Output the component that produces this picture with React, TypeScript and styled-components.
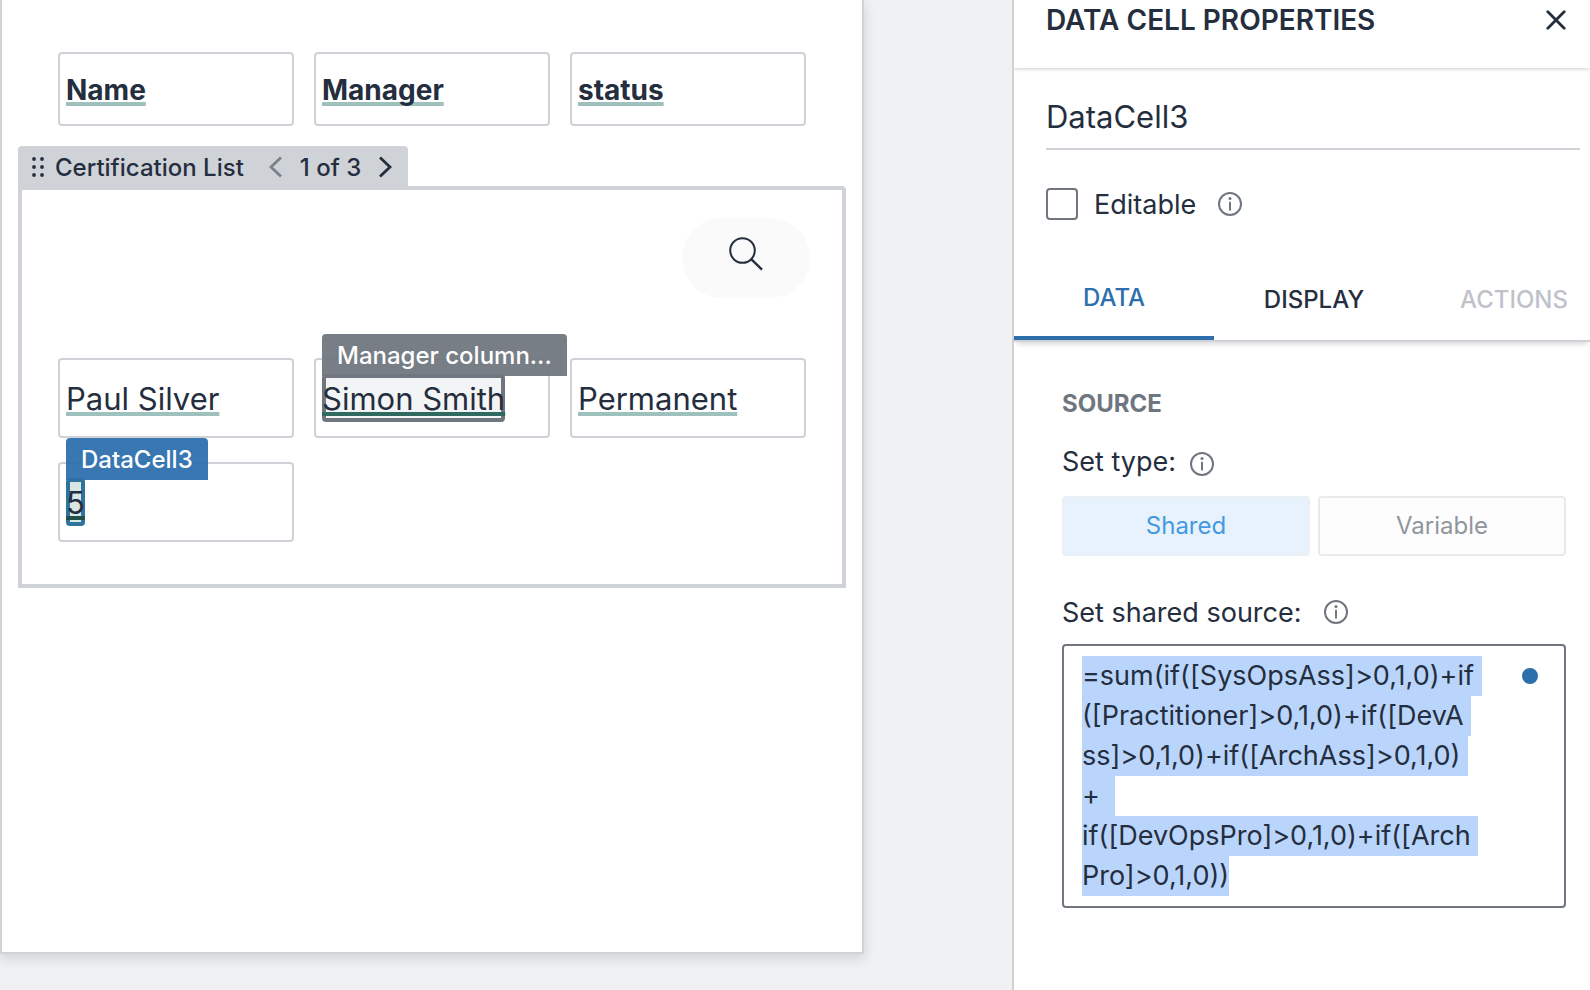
import React, { useEffect, useRef } from "react";
import styled, { createGlobalStyle, css } from "styled-components";

const ink = "#242e3e";
const line = "#cfd3d8";
const muted = "#6f7680";
const blue = "#2c6fac";

const GlobalStyle = createGlobalStyle`
  *, *::before, *::after { box-sizing: border-box; }
  body {
    margin: 0;
    background: #f0f1f3;
    color: ${ink};
    font-family: Inter, "Liberation Sans", sans-serif;
    font-size: 28px;
  }
  button, input, textarea { font: inherit; color: inherit; }
  button { cursor: pointer; }
`;

const Layout = styled.div`
  display: flex;
  min-height: 100vh;
  overflow: hidden;
`;

/* Canvas */

const Canvas = styled.main`
  flex: 1;
  min-width: 0;
  display: flex;
  padding: 0 148px 36px 0;
`;

const Page = styled.section`
  flex: 1;
  min-width: 0;
  padding: 52px 16px 0;
  background: #fff;
  border: 2px solid ${line};
  border-top: 0;
  box-shadow: 0 4px 12px rgba(0, 0, 0, 0.14);
`;

const CellGrid = styled.div<{ $inset?: boolean }>`
  display: grid;
  grid-template-columns: repeat(3, minmax(0, 1fr));
  gap: 24px 20px;
  padding: ${(p) => (p.$inset ? "0 40px" : "0")};
`;

const Cell = styled.div<{ $header?: boolean }>`
  display: flex;
  align-items: center;
  height: ${(p) => (p.$header ? 74 : 80)}px;
  padding: 0 6px;
  border: 2px solid ${line};
  border-radius: 4px;
  font-size: ${(p) => (p.$header ? 28 : 31)}px;
  font-weight: ${(p) => (p.$header ? 700 : 400)};
`;

type Mark = "hover" | "active";

const Value = styled.span<{ $mark?: Mark }>`
  position: relative;
  padding-top: 2px;
  line-height: 46px;
  white-space: nowrap;
  text-decoration: underline 4px #9fc1bd;
  text-underline-offset: 2px;
  text-decoration-skip-ink: none;
  border-radius: 4px;
  ${(p) =>
    p.$mark === "hover" &&
    css`
      background: #f3f4f5;
      box-shadow: inset 0 0 0 4px #6f7680;
      text-decoration-color: #30695f;
    `}
  ${(p) =>
    p.$mark === "active" &&
    css`
      background: #dae6e2;
      box-shadow: inset 0 0 0 4px #2f749f;
      text-decoration-color: #20504b;
    `}
`;

const Tag = styled.span<{ $mark: Mark }>`
  position: absolute;
  left: 0;
  bottom: calc(100% - 2px);
  z-index: 1;
  padding: 2px 15px 0;
  border-radius: 4px 4px 0 0;
  background: ${(p) =>
    p.$mark === "hover" ? "rgba(111, 118, 126, 0.94)" : "rgba(44, 111, 172, 0.94)"};
  color: #fff;
  font-size: 24px;
  font-weight: 500;
  line-height: 40px;
`;

const ListTab = styled.div`
  display: inline-flex;
  align-items: center;
  height: 40px;
  margin-top: 20px;
  padding: 2px 13px 0 14px;
  background: ${line};
  border-radius: 4px 4px 0 0;
  font-size: 24px;
  font-weight: 500;
  vertical-align: top;
`;

const TabTitle = styled.span`
  margin: 0 22px 0 11px;
`;

const StepButton = styled.button<{ $dim?: boolean }>`
  display: flex;
  padding: 0;
  border: 0;
  background: none;
  color: ${(p) => (p.$dim ? "#7b828c" : ink)};
`;

const StepCount = styled.span`
  margin: 0 14px;
`;

const ListBox = styled.div`
  padding: 28px 36px 42px;
  border: 4px solid ${line};
  border-radius: 0 4px 0 0;
`;

const SearchButton = styled.button`
  display: flex;
  align-items: center;
  justify-content: center;
  width: 128px;
  height: 80px;
  margin: 0 -4px 60px auto;
  padding: 0 0 8px;
  border: 0;
  border-radius: 40px;
  background: #fafafa;
`;

/* Properties panel */

const Panel = styled.aside`
  flex: 0 0 578px;
  min-width: 0;
  overflow: hidden;
  background: #fff;
  border-left: 2px solid ${line};
`;

const PanelHeader = styled.header`
  display: flex;
  align-items: center;
  justify-content: space-between;
  padding: 0 24px 28px 32px;
  box-shadow: 0 1px 4px rgba(0, 0, 0, 0.2);
`;

const PanelTitle = styled.h1`
  margin: 0;
  font-size: 28px;
  font-weight: 600;
  line-height: 40px;
`;

const CloseButton = styled.button`
  display: flex;
  padding: 0;
  border: 0;
  background: none;
`;

const Identity = styled.div`
  padding: 16px 10px 0 32px;
`;

const NameInput = styled.input`
  display: block;
  width: 100%;
  height: 66px;
  padding: 0;
  border: 0;
  border-bottom: 2px solid ${line};
  border-radius: 0;
  background: none;
  outline: none;
  font-size: 31px;
`;

const CheckRow = styled.div`
  display: flex;
  align-items: center;
  margin-top: 38px;
  height: 32px;
`;

const Checkbox = styled.input`
  appearance: none;
  width: 32px;
  height: 32px;
  margin: 0 16px 0 0;
  border: 2px solid ${muted};
  border-radius: 4px;
  background: #fff;
`;

const FieldLabel = styled.label`
  padding-top: 2px;
  font-size: 27px;
  line-height: 28px;
`;

const InfoButton = styled.button<{ $gap: number }>`
  display: flex;
  margin-left: ${(p) => p.$gap}px;
  padding: 0;
  border: 0;
  background: none;
  color: ${muted};
`;

const Tabs = styled.div`
  display: flex;
  margin-top: 40px;
  border-bottom: 2px solid ${line};
  box-shadow: 0 5px 5px -3px rgba(0, 0, 0, 0.16);
`;

const Tab = styled.button<{ $active?: boolean }>`
  flex: 0 0 200px;
  height: 80px;
  padding: 0 0 2px;
  border: 0;
  border-bottom: ${(p) => (p.$active ? `4px solid ${blue}` : "0")};
  background: none;
  color: ${(p) => (p.$active ? blue : ink)};
  font-size: 24px;
  font-weight: 500;
  &:disabled { color: #bfc3c9; }
`;

const Source = styled.div`
  padding: 46px 24px 0 48px;
`;

const SectionTitle = styled.h2`
  margin: 0 0 26px;
  color: ${muted};
  font-size: 24px;
  font-weight: 700;
  line-height: 32px;
`;

const LabelRow = styled.div<{ $align: "center" | "end" }>`
  display: flex;
  align-items: ${(p) => p.$align};
  height: 30px;
`;

const Choices = styled.div`
  display: grid;
  grid-template-columns: 1fr 1fr;
  gap: 8px;
  margin: 20px 0 41px;
`;

const Choice = styled.button<{ $active?: boolean }>`
  height: 60px;
  padding: 0 0 2px;
  border: 2px solid ${(p) => (p.$active ? "#eaf0f6" : "#e9eaec")};
  border-radius: 4px;
  background: ${(p) => (p.$active ? "#e8f2fd" : "#fdfdfd")};
  color: ${(p) => (p.$active ? "#4499e0" : "#91969e")};
  font-size: 24px;
`;

const SourceField = styled.div`
  display: flex;
  align-items: flex-start;
  margin-top: 17px;
  padding: 10px 26px 10px 18px;
  border: 2px solid ${muted};
  border-radius: 4px;
`;

const Formula = styled.textarea`
  flex: 1;
  min-width: 0;
  height: 240px;
  padding: 0;
  border: 0;
  outline: none;
  resize: none;
  overflow: hidden;
  white-space: pre;
  background: none;
  font-size: 27px;
  line-height: 40px;
  &::selection { background: #bad5fb; color: ${ink}; }
`;

const Dot = styled.span`
  width: 16px;
  height: 16px;
  margin-top: 12px;
  border-radius: 50%;
  background: ${blue};
`;

const formula = [
  "=sum(if([SysOpsAss]>0,1,0)+if",
  "([Practitioner]>0,1,0)+if([DevA",
  "ss]>0,1,0)+if([ArchAss]>0,1,0)",
  "+ ",
  "if([DevOpsPro]>0,1,0)+if([Arch",
  "Pro]>0,1,0))",
].join("\n");

const headers = ["Name", "Manager", "status"];

const cells: { text: string; mark?: Mark; tag?: string }[] = [
  { text: "Paul Silver" },
  { text: "Simon Smith", mark: "hover", tag: "Manager column..." },
  { text: "Permanent" },
  { text: "5", mark: "active", tag: "DataCell3" },
];

const Grip = () => (
  <svg width="12" height="20" viewBox="0 0 12 20" fill={ink} aria-hidden="true">
    {[2, 10, 18].map((y) => (
      <React.Fragment key={y}>
        <circle cx="2" cy={y} r="1.9" />
        <circle cx="10" cy={y} r="1.9" />
      </React.Fragment>
    ))}
  </svg>
);

const Chevron = ({ back }: { back?: boolean }) => (
  <svg width="20" height="24" viewBox="0 0 20 24" fill="none" stroke="currentColor" strokeWidth="2.8" aria-hidden="true">
    <path d={back ? "M15 2.5 5 12l10 9.5" : "M5 2.5 15 12 5 21.5"} />
  </svg>
);

const Info = ({ gap, label }: { gap: number; label: string }) => (
  <InfoButton type="button" $gap={gap} aria-label={label}>
    <svg width="24" height="24" viewBox="0 0 24 24" fill="none" stroke="currentColor" strokeWidth="2" aria-hidden="true">
      <circle cx="12" cy="12" r="11" />
      <path d="M12 10.4v7.4" strokeLinecap="round" />
      <circle cx="12" cy="6.4" r="1.5" fill="currentColor" stroke="none" />
    </svg>
  </InfoButton>
);

export default function App() {
  const formulaRef = useRef<HTMLTextAreaElement>(null);

  useEffect(() => {
    formulaRef.current?.focus();
    formulaRef.current?.select();
  }, []);

  return (
    <>
      <GlobalStyle />
      <Layout>
        <Canvas>
          <Page>
            <CellGrid $inset>
              {headers.map((h) => (
                <Cell key={h} $header>
                  <Value>{h}</Value>
                </Cell>
              ))}
            </CellGrid>
            <ListTab>
              <Grip />
              <TabTitle>Certification List</TabTitle>
              <StepButton type="button" $dim aria-label="Previous record">
                <Chevron back />
              </StepButton>
              <StepCount>1 of 3</StepCount>
              <StepButton type="button" aria-label="Next record">
                <Chevron />
              </StepButton>
            </ListTab>
            <ListBox>
              <SearchButton type="button" aria-label="Search">
                <svg width="34" height="34" viewBox="0 0 34 34" fill="none" stroke={ink} strokeWidth="2" aria-hidden="true">
                  <circle cx="13.5" cy="13.5" r="12.3" />
                  <path d="M22.2 22.2 33 32.6" strokeWidth="2.4" />
                </svg>
              </SearchButton>
              <CellGrid>
                {cells.map((c) => (
                  <Cell key={c.text}>
                    <Value $mark={c.mark}>
                      {c.text}
                      {c.mark && <Tag $mark={c.mark}>{c.tag}</Tag>}
                    </Value>
                  </Cell>
                ))}
              </CellGrid>
            </ListBox>
          </Page>
        </Canvas>
        <Panel>
          <PanelHeader>
            <PanelTitle>DATA CELL PROPERTIES</PanelTitle>
            <CloseButton type="button" aria-label="Close">
              <svg width="20" height="20" viewBox="0 0 20 20" stroke={ink} strokeWidth="2.8" strokeLinecap="round" aria-hidden="true">
                <path d="M1.8 1.8 18.2 18.2M18.2 1.8 1.8 18.2" />
              </svg>
            </CloseButton>
          </PanelHeader>
          <Identity>
            <NameInput aria-label="Name" defaultValue="DataCell3" />
            <CheckRow>
              <Checkbox type="checkbox" id="editable" />
              <FieldLabel htmlFor="editable">Editable</FieldLabel>
              <Info gap={22} label="About editable" />
            </CheckRow>
          </Identity>
          <Tabs role="tablist">
            <Tab type="button" role="tab" aria-selected="true" $active>DATA</Tab>
            <Tab type="button" role="tab" aria-selected="false">DISPLAY</Tab>
            <Tab type="button" role="tab" aria-selected="false" disabled>ACTIONS</Tab>
          </Tabs>
          <Source>
            <SectionTitle>SOURCE</SectionTitle>
            <LabelRow $align="end">
              <FieldLabel as="span" id="set-type">Set type:</FieldLabel>
              <Info gap={14} label="About set type" />
            </LabelRow>
            <Choices role="group" aria-labelledby="set-type">
              <Choice type="button" $active>Shared</Choice>
              <Choice type="button">Variable</Choice>
            </Choices>
            <LabelRow $align="center">
              <FieldLabel htmlFor="formula">Set shared source:</FieldLabel>
              <Info gap={22} label="About shared source" />
            </LabelRow>
            <SourceField>
              <Formula id="formula" ref={formulaRef} defaultValue={formula} spellCheck={false} />
              <Dot />
            </SourceField>
          </Source>
        </Panel>
      </Layout>
    </>
  );
}
